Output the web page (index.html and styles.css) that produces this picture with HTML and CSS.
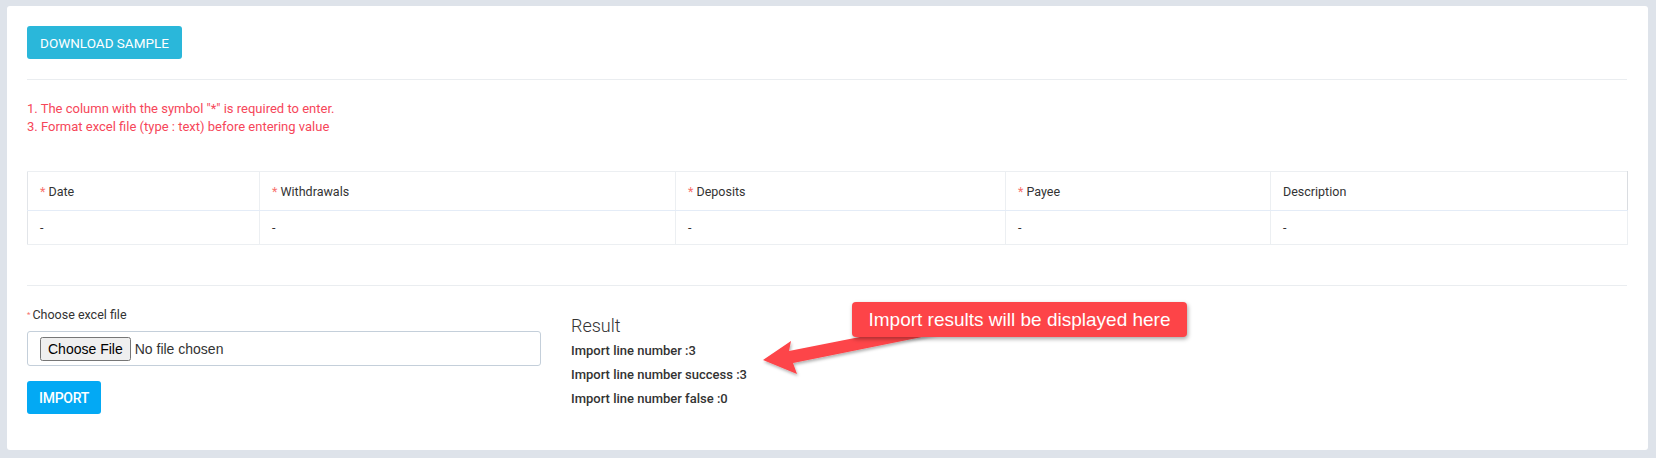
FILE: index.html
```html
<!DOCTYPE html>
<html>
<head>
<meta charset="utf-8">
<link rel="stylesheet" href="styles.css">
</head>
<body>
<div class="card">
  <button class="btn btn-info">DOWNLOAD SAMPLE</button>
  <hr class="sep sep-top">
  <div class="notes">
    <div>1. The column with the symbol "*" is required to enter.</div>
    <div>3. Format excel file (type : text) before entering value</div>
  </div>
  <table class="tbl">
    <colgroup>
      <col style="width:232px"><col style="width:416px"><col style="width:330px"><col style="width:265px"><col style="width:357px">
    </colgroup>
    <thead>
      <tr>
        <th><span class="req">*</span> Date</th>
        <th><span class="req">*</span> Withdrawals</th>
        <th><span class="req">*</span> Deposits</th>
        <th><span class="req">*</span> Payee</th>
        <th>Description</th>
      </tr>
    </thead>
    <tbody>
      <tr><td>-</td><td>-</td><td>-</td><td>-</td><td>-</td></tr>
    </tbody>
  </table>
  <hr class="sep sep-bottom">
  <div class="bottom">
    <div class="left">
      <div class="label"><span class="req-small">*</span>Choose excel file</div>
      <div class="file-box"><input type="file" class="file"></div>
      <button class="btn btn-import">IMPORT</button>
    </div>
    <div class="right">
      <div class="result-title">Result</div>
      <div class="result-line first">Import line number :3</div>
      <div class="result-line">Import line number success :3</div>
      <div class="result-line">Import line number false :0</div>
    </div>
  </div>
  <div class="annotation">
    <svg class="arrow" width="200" height="90" viewBox="0 0 200 90">
      <defs>
        <filter id="sh" x="-10%" y="-20%" width="130%" height="160%">
          <feDropShadow dx="1" dy="2" stdDeviation="1.5" flood-color="#000" flood-opacity="0.3"/>
        </filter>
      </defs>
      <polygon filter="url(#sh)" fill="#fd4448" points="8,64 36,45 34,55 120,38 182,38 38,67 42,78"/>
    </svg>
    <div class="callout">Import results will be displayed here</div>
  </div>
</div>
</body>
</html>
```

FILE: styles.css
```css
html, body {
  margin: 0;
  padding: 0;
}
body {
  background: #dee3ea;
  padding: 6px 8px 8px 7px;
  font-family: Roboto, "Liberation Sans", Arial, sans-serif;
  color: #333;
}
.card {
  position: relative;
  background: #fff;
  border-radius: 3px;
  width: 1600px;
  height: 404px;
  padding: 20px 21px 20px 20px;
}
.btn {
  display: block;
  border: none;
  color: #fff;
  font-family: Roboto, "Liberation Sans", Arial, sans-serif;
  font-size: 13px;
  border-radius: 3px;
  cursor: pointer;
}
.btn-info {
  background: #2ab7da;
  width: 155px;
  height: 33px;
  padding: 0;
  font-size: 13.5px;
}
.sep {
  border: none;
  border-top: 1px solid #eaedf0;
  margin: 0;
}
.sep-top {
  margin-top: 20px;
}
.notes {
  margin-top: 20px;
  color: #f6465a;
  font-size: 13px;
  line-height: 18px;
}
.tbl {
  margin-top: 35px;
  width: 1600px;
  border-collapse: collapse;
  table-layout: fixed;
  font-size: 12.5px;
}
.tbl th, .tbl td {
  border: 1px solid #eceff2;
  text-align: left;
  font-weight: 400;
  color: #333;
  padding: 0 12px;
}
.tbl th {
  height: 38px;
  border-bottom: 1px solid #e4ecf7;
}
.tbl td {
  height: 33px;
}
.tbl th:first-child, .tbl td:first-child {
  border-left-color: #e2e5e9;
}
.tbl th:last-child {
  border-right-color: #dadde1;
}
.req {
  color: #f8716d;
}
.sep-bottom {
  margin-top: 40px;
}
.bottom {
  display: flex;
  margin-top: 20px;
}
.left {
  width: 514px;
}
.label {
  font-size: 12.5px;
  line-height: 18px;
}
.req-small {
  color: #f8716d;
  font-size: 8px;
  margin-right: 2px;
  vertical-align: 2px;
}
.file-box {
  margin-top: 7px;
  height: 33px;
  border: 1px solid #c4cfda;
  border-radius: 3px;
  display: flex;
  align-items: center;
  padding-left: 12px;
}
.file {
  font-family: "Liberation Sans", Arial, sans-serif;
  font-size: 14px;
  color: #333;
}
.file::file-selector-button {
  font-family: "Liberation Sans", Arial, sans-serif;
  font-size: 14px;
  padding: 2px 6px;
  margin-right: 4px;
}
.btn-import {
  margin-top: 15px;
  background: #03a9f4;
  width: 74px;
  height: 33px;
  padding: 0;
  font-size: 14px;
  font-weight: 500;
  letter-spacing: -0.3px;
}
.right {
  margin-left: 30px;
  padding-top: 9px;
}
.result-title {
  font-size: 18px;
  font-weight: 300;
  line-height: 22px;
  color: #333;
}
.result-line {
  font-size: 13px;
  font-weight: 500;
  line-height: 24px;
  color: #333;
}
.result-line.first {
  margin-top: 2px;
}
.annotation {
  position: absolute;
  left: 748px;
  top: 290px;
  width: 440px;
  height: 90px;
}
.arrow {
  position: absolute;
  left: 0;
  top: 0;
}
.callout {
  position: absolute;
  left: 97px;
  top: 6px;
  width: 335px;
  height: 35px;
  background: #fd4448;
  border-radius: 4px;
  box-shadow: 1px 2px 4px rgba(0, 0, 0, 0.35);
  color: #fff;
  font-family: "Liberation Sans", Arial, sans-serif;
  font-size: 19px;
  line-height: 35px;
  text-align: center;
}
```
